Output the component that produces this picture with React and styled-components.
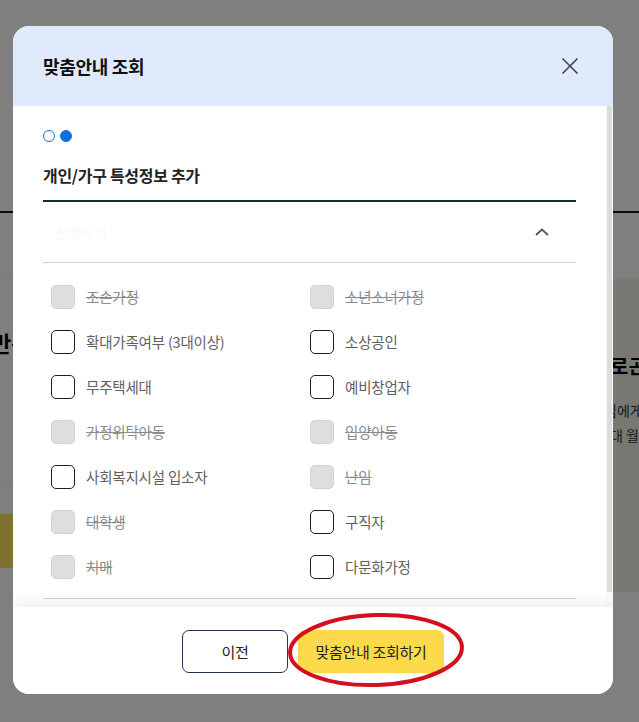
import styled, { createGlobalStyle } from "styled-components";

const GlobalStyle = createGlobalStyle`
  html, body {
    margin: 0;
    padding: 0;
  }
  body {
    font-family: "Noto Sans CJK KR", "Noto Sans", sans-serif;
    background: #fff;
  }
  * {
    box-sizing: border-box;
  }
`;

const Stage = styled.div`
  position: relative;
  width: 639px;
  height: 722px;
  overflow: hidden;
`;

/* page behind the dimmed layer */
const BackPage = styled.div`
  display: flex;
  flex-direction: column;
  height: 100%;
  background: #fff;
`;

const TopArea = styled.div`
  height: 213px;
  border-bottom: 2px solid #1a1a1a;
`;

const Main = styled.div`
  display: flex;
  padding-top: 66px;
`;

const LeftCol = styled.div`
  flex: 1;
  border-top: 1px solid #f2f2f2;
  padding-top: 50px;
`;

const BackHeading = styled.h2`
  margin: 0;
  font-size: 22px;
  font-weight: 700;
  line-height: 24px;
  color: #000;
  text-indent: -9px;
  white-space: nowrap;
`;

const BackDivider = styled.div`
  margin-top: 130px;
  border-top: 1px solid #f0f0f0;
`;

const BackButton = styled.div`
  margin-top: 29px;
  width: 220px;
  height: 54px;
  background: #ffe25e;
`;

const RightCol = styled.div`
  width: 39px;
  height: 313px;
  background: #eef1e2;
  padding: 75px 0 0 10px;
  white-space: nowrap;
`;

const RightHeading = styled.div`
  font-size: 20px;
  font-weight: 700;
  line-height: 24px;
  color: #000;
`;

const RightText = styled.div`
  margin-top: 20px;
  font-size: 14px;
  line-height: 25px;
  color: #333;
  text-indent: -6px;
`;

const Overlay = styled.div`
  position: absolute;
  inset: 0;
  background: rgba(0, 0, 0, 0.5);
  display: flex;
  align-items: flex-start;
  padding: 26px 0 0 13px;
`;

const Modal = styled.div`
  width: 600px;
  height: 668px;
  background: #fff;
  border-radius: 16px;
  overflow: hidden;
  display: flex;
  flex-direction: column;
`;

const Header = styled.div`
  height: 80px;
  flex-shrink: 0;
  background: #dfebfc;
  display: flex;
  align-items: center;
  justify-content: space-between;
  padding: 0 32px 0 30px;
`;

const Title = styled.h2`
  margin: 0;
  font-size: 18px;
  font-weight: 700;
  color: #111;
  letter-spacing: -0.3px;
`;

const CloseButton = styled.button`
  width: 22px;
  height: 22px;
  padding: 0;
  border: 0;
  background: none;
  display: flex;
  align-items: center;
  justify-content: center;
`;

const BodyRow = styled.div`
  flex: 1;
  min-height: 0;
  display: flex;
`;

const Body = styled.div`
  flex: 1;
  padding: 24px 30px 0;
`;

const ScrollTrack = styled.div`
  width: 7px;
  background: #fafafa;
  padding: 0 1px;
`;

const ScrollThumb = styled.div`
  height: 486px;
  background: #dcdcdc;
`;

const Steps = styled.div`
  display: flex;
  gap: 5px;
`;

const Dot = styled.span`
  width: 12px;
  height: 12px;
  border-radius: 50%;
  border: 1.5px solid #1d6fd6;
  background: ${(p) => (p.$active ? "#0b6fe0" : "#fff")};
`;

const Subtitle = styled.h3`
  margin: 21px 0 13px;
  font-size: 16px;
  line-height: 24px;
  font-weight: 700;
  color: #222;
  letter-spacing: -0.3px;
`;

const Accordion = styled.div`
  border-top: 2px solid #1b2a33;
`;

const AccordionHead = styled.div`
  height: 61px;
  border-bottom: 1px solid #c6d3dd;
  display: flex;
  align-items: center;
  justify-content: space-between;
  padding: 0 26px 0 12px;
`;

const Placeholder = styled.span`
  font-size: 14px;
  color: #f8f8f8;
`;

const Panel = styled.div`
  display: grid;
  grid-template-columns: 259px 1fr;
  padding: 11px 0 9px 8px;
  border-bottom: 1px solid #c6d3dd;
`;

const Option = styled.label`
  height: 45px;
  display: flex;
  align-items: center;
  gap: 11px;
`;

const Box = styled.span`
  width: 24px;
  height: 24px;
  border-radius: 5px;
  border: 1px solid ${(p) => (p.$disabled ? "#d2d2d2" : "#1e1e1e")};
  background: ${(p) => (p.$disabled ? "#dedede" : "#fff")};
`;

const Label = styled.span`
  font-size: 14.5px;
  color: ${(p) => (p.$disabled ? "#8c8c8c" : "#606060")};
  text-decoration: ${(p) => (p.$disabled ? "line-through" : "none")};
  letter-spacing: -0.2px;
`;

const Footer = styled.div`
  position: relative;
  height: 87px;
  flex-shrink: 0;
  background: #fff;
  box-shadow: 0 -6px 12px rgba(0, 0, 0, 0.06);
  display: flex;
  justify-content: center;
  align-items: flex-start;
  gap: 10px;
  padding-top: 23px;
`;

const Button = styled.button`
  height: 43px;
  width: ${(p) => p.$width}px;
  border-radius: 7px;
  border: 1px solid ${(p) => (p.$primary ? "#fcd94a" : "#22344a")};
  background: ${(p) => (p.$primary ? "#fdda4c" : "#fff")};
  font-family: inherit;
  font-size: 15px;
  color: #222;
  letter-spacing: -0.3px;
`;

const Annotation = styled.svg`
  position: absolute;
  left: 280px;
  top: 606px;
  pointer-events: none;
`;

const options = [
  ["조손가정", true],
  ["소년소녀가정", true],
  ["확대가족여부 (3대이상)", false],
  ["소상공인", false],
  ["무주택세대", false],
  ["예비창업자", false],
  ["가정위탁아동", true],
  ["입양아동", true],
  ["사회복지시설 입소자", false],
  ["난임", true],
  ["대학생", true],
  ["구직자", false],
  ["치매", true],
  ["다문화가정", false],
];

export default function App() {
  return (
    <Stage>
      <GlobalStyle />
      <BackPage>
        <TopArea />
        <Main>
          <LeftCol>
            <BackHeading>만족도 조사</BackHeading>
            <BackDivider />
            <BackButton />
          </LeftCol>
          <RightCol>
            <RightHeading>로곤</RightHeading>
            <RightText>
              님에게
              <br />
              대 월
            </RightText>
          </RightCol>
        </Main>
      </BackPage>
      <Overlay>
        <Modal>
          <Header>
            <Title>맞춤안내 조회</Title>
            <CloseButton aria-label="닫기">
              <svg width="18" height="18" viewBox="0 0 18 18">
                <path
                  d="M1.5 1.5 L16.5 16.5 M16.5 1.5 L1.5 16.5"
                  stroke="#444"
                  strokeWidth="1.6"
                  fill="none"
                />
              </svg>
            </CloseButton>
          </Header>
          <BodyRow>
            <Body>
              <Steps>
                <Dot />
                <Dot $active />
              </Steps>
              <Subtitle>개인/가구 특성정보 추가</Subtitle>
              <Accordion>
                <AccordionHead>
                  <Placeholder>선택하기</Placeholder>
                  <svg width="16" height="10" viewBox="0 0 16 10">
                    <path
                      d="M2 8 L8 2.5 L14 8"
                      stroke="#555"
                      strokeWidth="1.8"
                      fill="none"
                    />
                  </svg>
                </AccordionHead>
                <Panel>
                  {options.map(([text, disabled]) => (
                    <Option key={text}>
                      <Box $disabled={disabled} />
                      <Label $disabled={disabled}>{text}</Label>
                    </Option>
                  ))}
                </Panel>
              </Accordion>
            </Body>
            <ScrollTrack>
              <ScrollThumb />
            </ScrollTrack>
          </BodyRow>
          <Footer>
            <Button $width={106}>이전</Button>
            <Button $width={146} $primary>
              맞춤안내 조회하기
            </Button>
          </Footer>
        </Modal>
      </Overlay>
      <Annotation width="200" height="90" viewBox="0 0 200 90">
        <ellipse
          cx="96"
          cy="44"
          rx="86"
          ry="35"
          stroke="#d3101f"
          strokeWidth="4"
          fill="none"
          transform="rotate(-2 96 44)"
        />
      </Annotation>
    </Stage>
  );
}
